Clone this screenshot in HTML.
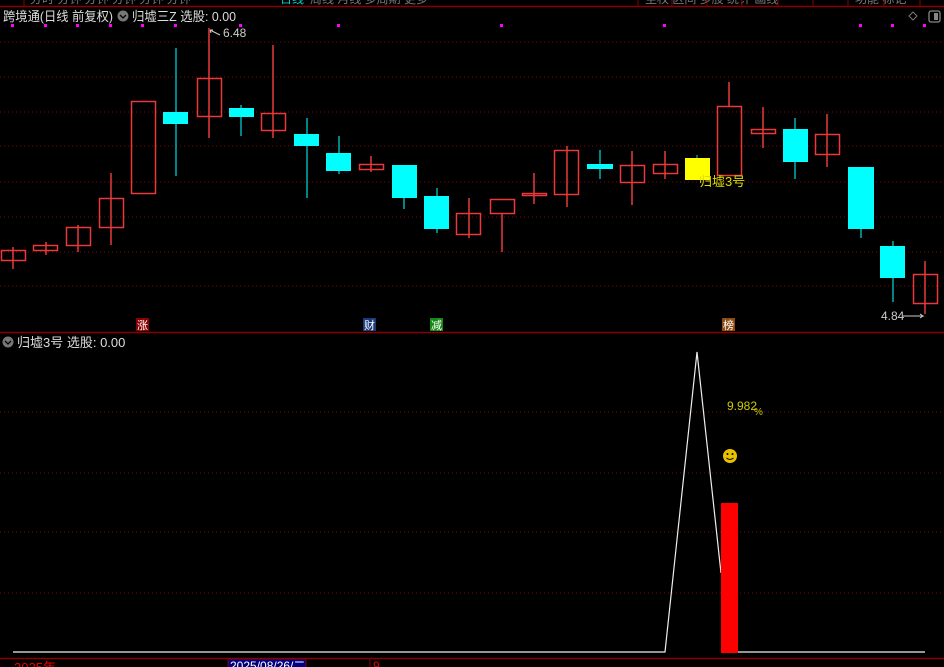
<!DOCTYPE html>
<html><head><meta charset="utf-8"><style>
html,body{margin:0;padding:0;background:#000;width:944px;height:667px;overflow:hidden}
svg{display:block}
text{font-family:"Liberation Sans","Noto Sans CJK SC",sans-serif}
</style></head><body>
<svg width="944" height="667" viewBox="0 0 944 667" xmlns="http://www.w3.org/2000/svg">
<rect width="944" height="667" fill="#000"/>
<g fill="#777" font-size="12">
<text x="30" y="3">分时 分钟 分钟 分钟 分钟 分钟</text>
<text x="280" y="3" fill="#0cc">日线</text>
<text x="310" y="3">周线 月线 多周期 更多</text>
<text x="645" y="3">至权 区间 多股 统计 画线</text>
<text x="855" y="3">功能 标记</text>
</g>
<line x1="0" y1="6.5" x2="944" y2="6.5" stroke="#8a0000" stroke-width="1.5"/>
<g stroke="#8a0000"><line x1="24" y1="0" x2="24" y2="6"/><line x1="638" y1="0" x2="638" y2="6"/><line x1="672" y1="0" x2="672" y2="6"/><line x1="707" y1="0" x2="707" y2="6"/><line x1="742" y1="0" x2="742" y2="6"/><line x1="778" y1="0" x2="778" y2="6"/><line x1="813" y1="0" x2="813" y2="6"/><line x1="848" y1="0" x2="848" y2="6"/><line x1="884" y1="0" x2="884" y2="6"/><line x1="920" y1="0" x2="920" y2="6"/></g>
<text x="3" y="21" font-size="13" fill="#ddd" textLength="110" lengthAdjust="spacingAndGlyphs">跨境通(日线 前复权)</text>
<circle cx="123" cy="16" r="5.5" fill="#777"/><path d="M120 15l3 3 3-3" stroke="#000" fill="none" stroke-width="1.3"/>
<text x="132" y="21" font-size="13" fill="#ddd" textLength="104" lengthAdjust="spacingAndGlyphs">归墟三Z 选股: 0.00</text>
<path d="M913 12l4 4-4 4-4-4z" stroke="#777" fill="none"/>
<rect x="929" y="11" width="11" height="11" rx="2" stroke="#888" fill="none" stroke-width="1.3"/><rect x="934" y="13" width="4" height="7" fill="#888"/>
<g fill="#f0f">
<rect x="11" y="24" width="3" height="3"/><rect x="44" y="24" width="3" height="3"/><rect x="76" y="24" width="3" height="3"/><rect x="109" y="24" width="3" height="3"/><rect x="141" y="24" width="3" height="3"/><rect x="174" y="24" width="3" height="3"/><rect x="239" y="24" width="3" height="3"/><rect x="337" y="24" width="3" height="3"/><rect x="500" y="24" width="3" height="3"/><rect x="663" y="24" width="3" height="3"/><rect x="859" y="24" width="3" height="3"/><rect x="891" y="24" width="3" height="3"/><rect x="923" y="24" width="3" height="3"/>
</g>
<g stroke="#8a0000" stroke-dasharray="1 3">
<line x1="0" y1="42" x2="944" y2="42"/><line x1="0" y1="77" x2="944" y2="77"/><line x1="0" y1="112" x2="944" y2="112"/><line x1="0" y1="146" x2="944" y2="146"/><line x1="0" y1="182" x2="944" y2="182"/><line x1="0" y1="217" x2="944" y2="217"/><line x1="0" y1="252" x2="944" y2="252"/><line x1="0" y1="286" x2="944" y2="286"/>
<line x1="0" y1="412" x2="944" y2="412"/><line x1="0" y1="473" x2="944" y2="473"/><line x1="0" y1="532" x2="944" y2="532"/><line x1="0" y1="593" x2="944" y2="593"/>
</g>
<text x="223" y="37" font-size="12" fill="#ccc">6.48</text>
<path d="M210 30l10 5M210 30l3 0M210 30l1 3" stroke="#ccc" fill="none"/>
<g stroke="#e83a3a" stroke-width="1.5" fill="none">
<line x1="13" y1="247" x2="13" y2="269"/><rect x="1.5" y="250.5" width="24" height="10"/>
<line x1="46" y1="242" x2="46" y2="255"/><rect x="33.5" y="245.5" width="24" height="5"/>
<line x1="78" y1="225" x2="78" y2="252"/><rect x="66.5" y="227.5" width="24" height="18"/>
<line x1="111" y1="173" x2="111" y2="245"/><rect x="99.5" y="198.5" width="24" height="29"/>
<rect x="131.5" y="101.5" width="24" height="92"/>
<line x1="209" y1="28" x2="209" y2="138"/><rect x="197.5" y="78.5" width="24" height="38"/>
<line x1="273" y1="45" x2="273" y2="138"/><rect x="261.5" y="113.5" width="24" height="17"/>
<line x1="371" y1="156" x2="371" y2="172"/><rect x="359.5" y="164.5" width="24" height="5"/>
<line x1="469" y1="198" x2="469" y2="238"/><rect x="456.5" y="213.5" width="24" height="21"/>
<line x1="502" y1="213" x2="502" y2="252"/><rect x="490.5" y="199.5" width="24" height="14"/>
<line x1="534" y1="173" x2="534" y2="204"/><rect x="522.5" y="193.5" width="24" height="2"/>
<line x1="567" y1="146" x2="567" y2="207"/><rect x="554.5" y="150.5" width="24" height="44"/>
<line x1="632" y1="151" x2="632" y2="205"/><rect x="620.5" y="165.5" width="24" height="17"/>
<line x1="665" y1="151" x2="665" y2="179"/><rect x="653.5" y="164.5" width="24" height="9"/>
<line x1="729" y1="82" x2="729" y2="106"/><rect x="717.5" y="106.5" width="24" height="69"/>
<line x1="763" y1="107" x2="763" y2="148"/><rect x="751.5" y="129.5" width="24" height="4"/>
<line x1="827" y1="114" x2="827" y2="167"/><rect x="815.5" y="134.5" width="24" height="20"/>
<line x1="925" y1="261" x2="925" y2="314"/><rect x="913.5" y="274.5" width="24" height="29"/>
</g>
<g stroke="#0cc" stroke-width="1.3">
<line x1="176" y1="48" x2="176" y2="176"/><line x1="241" y1="105" x2="241" y2="136"/><line x1="307" y1="118" x2="307" y2="198"/><line x1="339" y1="136" x2="339" y2="174"/><line x1="404" y1="165" x2="404" y2="209"/><line x1="437" y1="188" x2="437" y2="233"/><line x1="600" y1="150" x2="600" y2="179"/><line x1="795" y1="118" x2="795" y2="179"/><line x1="861" y1="167" x2="861" y2="238"/><line x1="893" y1="241" x2="893" y2="302"/>
</g>
<g fill="#0ff">
<rect x="163" y="112" width="25" height="12"/><rect x="229" y="108" width="25" height="9"/><rect x="294" y="134" width="25" height="12"/><rect x="326" y="153" width="25" height="18"/><rect x="392" y="165" width="25" height="33"/><rect x="424" y="196" width="25" height="33"/><rect x="587" y="164" width="26" height="5"/><rect x="783" y="129" width="25" height="33"/><rect x="848" y="167" width="26" height="62"/><rect x="880" y="246" width="25" height="32"/>
</g>
<line x1="697" y1="155" x2="697" y2="158" stroke="#0cc"/>
<rect x="685" y="158" width="25" height="22" fill="#ff0"/>
<text x="699" y="186" font-size="13" fill="#dd0">归墟3号</text>
<text x="881" y="320" font-size="12" fill="#ccc">4.84</text>
<path d="M903 316h20l-3-2M923 316l-3 2" stroke="#ccc" fill="none"/>
<rect x="136" y="318" width="13" height="13" fill="#8a0000"/><text x="137" y="329" font-size="11" fill="#fff">涨</text>
<rect x="363" y="318" width="13" height="13" fill="#1a3a7a"/><text x="364" y="329" font-size="11" fill="#fff">财</text>
<rect x="430" y="318" width="13" height="13" fill="#138a13"/><text x="431" y="329" font-size="11" fill="#fff">减</text>
<rect x="722" y="318" width="13" height="13" fill="#8a4a10"/><text x="723" y="329" font-size="11" fill="#fff">榜</text>
<line x1="0" y1="332.5" x2="944" y2="332.5" stroke="#8a0000" stroke-width="1.5"/>
<circle cx="8" cy="342" r="5.5" fill="#777"/><path d="M5 341l3 3 3-3" stroke="#000" fill="none" stroke-width="1.3"/>
<text x="17" y="347" font-size="13" fill="#ddd">归墟3号 选股: 0.00</text>
<polyline points="13,652 665,652 697,352 721,573" stroke="#eee" fill="none" stroke-width="1.2"/>
<line x1="738" y1="652" x2="925" y2="652" stroke="#eee" stroke-width="1.2"/>
<rect x="721" y="503" width="17" height="150" fill="#f00"/>
<text x="727" y="410" font-size="12" fill="#cc0">9.982</text>
<text x="754" y="415" font-size="10" fill="#cc0">%</text>
<circle cx="730" cy="456" r="7" fill="#e8c000"/>
<circle cx="727.5" cy="454" r="1" fill="#000"/><circle cx="732.5" cy="454" r="1" fill="#000"/>
<path d="M726.5 458q3.5 3 7 0" stroke="#000" fill="none"/>
<line x1="0" y1="658.5" x2="944" y2="658.5" stroke="#8a0000" stroke-width="1.5"/>
<text x="14" y="672" font-size="13" fill="#e00">2025年</text>
<rect x="228" y="659" width="78" height="10" fill="#000080" stroke="#8a0000"/>
<text x="230" y="670" font-size="12" fill="#fff">2025/08/26/二</text>
<line x1="370" y1="659" x2="370" y2="667" stroke="#8a0000"/>
<text x="373" y="670" font-size="12" fill="#e00">9</text>
</svg>
</body></html>
